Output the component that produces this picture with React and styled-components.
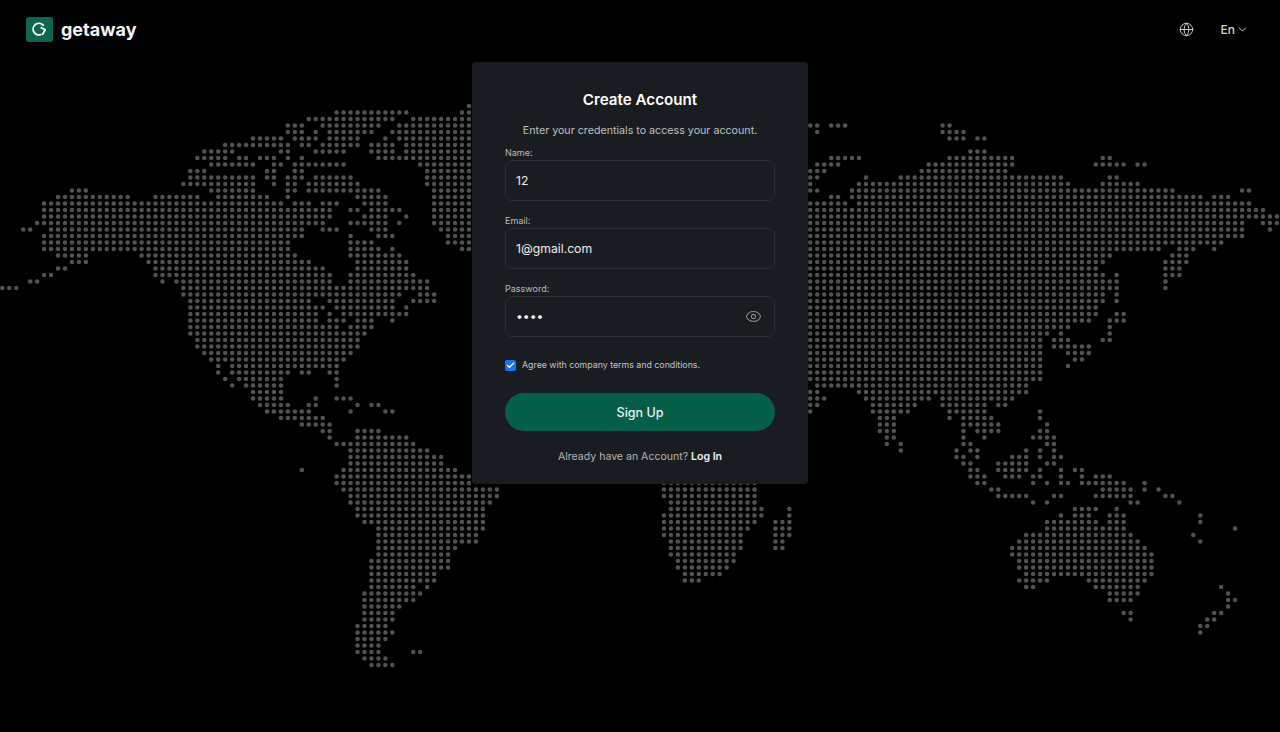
import React from "react";
import styled, { createGlobalStyle } from "styled-components";
import { Globe, ChevronDown, Eye, Check } from "lucide-react";

const GlobalStyle = createGlobalStyle`
  html, body { margin: 0; padding: 0; background: #000; }
  body { font-family: Inter, "Liberation Sans", sans-serif; }
  * { box-sizing: border-box; }
`;

const ROWS = {
  0: "67", 1: "48-58 66-67", 2: "44-56 59-67", 3: "41-43 46-54 57-67 116-117 119-121 135-136",
  4: "41-43 45 47-53 56-67 117 135-138", 5: "36-40 42-45 47-51 55 57-67 136-138 140-141",
  6: "32-41 43-44 46-51 53-56 58-67", 7: "29-33 40-41 45-49 53-56 58-67 139-141",
  8: "28-32 34-35 37-39 41 43 54-67 119-123 136-145 158-159",
  9: "30-36 39-40 42-49 60-67 117-120 133-145 157-161 163-164",
  10: "27-29 38-39 42-43 61-67 116-118 132-144",
  11: "27-36 38-39 41-43 45-50 61-67 116-117 124 129-152 159-160",
  12: "26-36 39 41-42 44-51 61-67 116 123-153 158-163",
  13: "10-12 30-36 41-42 44-54 62-67 116-117 122-168 178-179",
  14: "8-18 22-28 31-38 41 51-55 62-67 119-120 122-172 174-176",
  15: "6-40 42-44 46-48 52-55 62-67 116-121 123-179",
  16: "6-47 50-51 53-57 62-67 116-181",
  17: "6-47 52-55 58 62-67 116-183",
  18: "5-46 50-55 57 62-67 116-178 181-183",
  19: "3-4 7-43 46-48 53-55 63-67 116-178 182",
  20: "6-43 50 54-56 64-67 116-178",
  21: "6-41 50-53 64-67 116-175",
  22: "6-41 50-54 56 66-67 116-166 169-171 174",
  23: "8-12 20-42 50-57 116-159 168-170",
  24: "10-12 21-44 51-58 116-158 167-170",
  25: "8-9 22-46 51-58 116-157 167-169",
  26: "6-7 22-47 50-59 116-158 160 167-169",
  27: "4-5 23 25-47 50-61 116-160 167",
  28: "0-2 26-61 116-160 167",
  29: "26-57 60-62 116-158 160",
  30: "27-44 47-56 59-62 116-158 160",
  31: "27-46 48-56 58 116-157",
  32: "27-45 47 49-58 116-157 160-161",
  33: "27-45 47-49 51-53 56 116-156 159-161",
  34: "27-48 50-53 116-153 159",
  35: "27-52 116-149 150 152 159",
  36: "28-51 116-149 151-153 158-159",
  37: "28-51 116-149 151-156",
  38: "29-50 116-149 153-156",
  39: "30-49 116-149 154-155",
  40: "31 33-48 116-149 153",
  41: "31 33-41 43-44 47-48 116-149",
  42: "32 34-40 48 116-149",
  43: "33 35-40 48 117-147",
  44: "36-40 116-117 123-147",
  45: "36-40 45 48-50 116-118 124-133 135-145",
  46: "37-41 44-45 51 53-54 116-117 125-131 135-141 143-144",
  47: "38-44 50 55-56 116 125-130 136-141 149",
  48: "40-46 126-128 136 138-142 149",
  49: "43-47 126-128 138-143 150",
  50: "46-47 51-54 126-128 138 140-143 149-150",
  51: "47 51-58 127-128 138 141 148-151",
  52: "48-59 127 129 138-139 150-151",
  53: "50-61 129 137 139-140 147 149 151",
  54: "50-63 137-138 140 145-147 149 151-152",
  55: "50-63 138-139 143-147 150-151",
  56: "43 49-65 139-140 143-147 149 152 154-155",
  57: "48-67 139-141 144-146 148-149 152 155 157-159",
  58: "48-67 95-108 140-141 148 150 152-153 155-161 164",
  59: "49-71 95-108 142-143 158-162 164 166",
  60: "50-71 95-108 143-147 151-152 157-162 167-168",
  61: "50-70 96-108 148 150 162-163 169",
  62: "51-69 96-109 113 154-157 160",
  63: "51-69 95-109 113 152 154-156 159-161 172",
  64: "52-69 95-108 111-113 150-157 159-161 172",
  65: "54-69 95-107 111-113 150-161 177",
  66: "54-68 95-106 111-113 147-162 171",
  67: "54-68 96-106 111-112 146-163 172",
  68: "54-65 96-106 111-112 145-164",
  69: "54-64 96-105 145-165",
  70: "53-64 97-105 146-165",
  71: "53-64 97-104 146-165",
  72: "53-62 98-103 147-165",
  73: "53-62 98-100 146-150 156-164",
  74: "53-59 61 147-148 157-163 175",
  75: "52-60 159-163 176",
  76: "52-59 159-162 176-177",
  77: "52-57 176",
  78: "52-56 161-162 174-175",
  79: "52-56 162 173-174",
  80: "51-55 172-173",
  81: "51-56 172",
  82: "51-55",
  83: "51-54",
  84: "51-54 59-60",
  85: "52-55",
  86: "53-56",
};

const dots = Object.entries(ROWS).flatMap(([row, spec]) =>
  spec.split(" ").flatMap((part) => {
    const [a, b = a] = part.split("-").map(Number);
    const out = [];
    for (let c = a; c <= b; c++) out.push([2.3 + 6.965 * c, 106 + 6.5 * Number(row)]);
    return out;
  })
);

const Page = styled.div`
  display: grid;
  width: 1280px;
  height: 732px;
  overflow: hidden;
  background: #000;
`;
const MapLayer = styled.svg`
  grid-area: 1 / 1;
  display: block;
`;
const Content = styled.div`
  grid-area: 1 / 1;
  display: flex;
  flex-direction: column;
  align-items: center;
  z-index: 1;
`;
const Header = styled.header`
  width: 100%;
  height: 58px;
  padding: 0 31px 0 26px;
  display: flex;
  align-items: center;
  justify-content: space-between;
`;
const Brand = styled.div`
  display: flex;
  align-items: center;
  gap: 8px;
`;
const LogoMark = styled.div`
  width: 27px;
  height: 25px;
  border-radius: 3px;
  background: #0d674f;
  display: flex;
  align-items: center;
  justify-content: center;
`;
const BrandName = styled.span`
  font-size: 18px;
  font-weight: 700;
  color: #f4f4f4;
`;
const HeaderRight = styled.div`
  display: flex;
  align-items: center;
  gap: 26.5px;
  color: #d2d2d2;
`;
const LangButton = styled.div`
  display: flex;
  align-items: center;
  gap: 1px;
  font-size: 12px;
  font-weight: 500;
`;
const Card = styled.main`
  width: 336px;
  height: 422px;
  margin-top: 4px;
  padding: 29px 33px 0;
  background: #191c20;
  border-radius: 4px;
  display: flex;
  flex-direction: column;
`;
const Title = styled.h1`
  margin: 0;
  font-size: 15.2px;
  line-height: 18px;
  font-weight: 600;
  color: #fff;
  text-align: center;
`;
const Subtitle = styled.p`
  margin: 15px 0 0;
  font-size: 10.7px;
  line-height: 14px;
  color: #bfc1c3;
  text-align: center;
`;
const Field = styled.div`
  margin-top: ${(p) => p.$top}px;
  display: flex;
  flex-direction: column;
  gap: 1px;
`;
const Label = styled.label`
  font-size: 9px;
  line-height: 12px;
  color: #bcbec0;
`;
const InputBox = styled.div`
  height: 41px;
  padding: 0 12px 0 10px;
  display: flex;
  align-items: center;
  border: 1.5px solid #2b2f33;
  border-radius: 7px;
  background: #191c20;
  color: #85898c;
`;
const Input = styled.input`
  flex: 1;
  min-width: 0;
  padding: 0;
  border: 0;
  outline: 0;
  background: transparent;
  font: 400 12.2px Inter, sans-serif;
  color: #f0f0f0;
`;
const AgreeRow = styled.div`
  margin-top: 22px;
  display: flex;
  align-items: center;
  gap: 6px;
  font-size: 8.8px;
  line-height: 12px;
  color: #c4c5c7;
`;
const CheckBox = styled.span`
  width: 11px;
  height: 11px;
  border-radius: 2px;
  background: #1a73e8;
  display: flex;
  align-items: center;
  justify-content: center;
  color: #fff;
`;
const SubmitButton = styled.button`
  margin-top: 22px;
  height: 38px;
  border: 0;
  border-radius: 19px;
  background: #045f48;
  color: #e9f4f0;
  font: 500 12.5px Inter, sans-serif;
`;
const Footer = styled.p`
  margin: 19px 0 0;
  font-size: 10.55px;
  line-height: 14px;
  color: #b5b7b9;
  text-align: center;
`;
const LoginLink = styled.a`
  font-weight: 600;
  color: #f2f2f2;
`;

const LogoIcon = () => (
  <svg width="17" height="17" viewBox="0 0 17 17" fill="none" stroke="#fff" strokeWidth="1.8" strokeLinecap="round" strokeLinejoin="round">
    <path d="M12.2 4.2A5.8 5.8 0 1 0 9.6 13.7" />
    <path d="M10.2 6.6l4 2.2" />
    <path d="M14.2 8.8L11.6 13.2" />
  </svg>
);

export default function App() {
  return (
    <>
      <GlobalStyle />
      <Page>
        <MapLayer width="1280" height="732" viewBox="0 0 1280 732" aria-hidden="true">
          {dots.map(([x, y]) => (
            <circle key={`${x}-${y}`} cx={x} cy={y} r="2.25" fill="#525252" />
          ))}
        </MapLayer>
        <Content>
          <Header>
            <Brand>
              <LogoMark><LogoIcon /></LogoMark>
              <BrandName>getaway</BrandName>
            </Brand>
            <HeaderRight>
              <Globe size={15} strokeWidth={1.5} />
              <LangButton>En <ChevronDown size={13} strokeWidth={1.75} /></LangButton>
            </HeaderRight>
          </Header>
          <Card>
            <Title>Create Account</Title>
            <Subtitle>Enter your credentials to access your account.</Subtitle>
            <Field $top={9}>
              <Label>Name:</Label>
              <InputBox><Input readOnly value="12" /></InputBox>
            </Field>
            <Field $top={14}>
              <Label>Email:</Label>
              <InputBox><Input readOnly value="1@gmail.com" /></InputBox>
            </Field>
            <Field $top={14}>
              <Label>Password:</Label>
              <InputBox>
                <Input readOnly type="password" value="1234" />
                <Eye size={17} strokeWidth={1.5} />
              </InputBox>
            </Field>
            <AgreeRow>
              <CheckBox><Check size={9} strokeWidth={3.5} /></CheckBox>
              Agree with company terms and conditions.
            </AgreeRow>
            <SubmitButton>Sign Up</SubmitButton>
            <Footer>Already have an Account? <LoginLink>Log In</LoginLink></Footer>
          </Card>
        </Content>
      </Page>
    </>
  );
}
